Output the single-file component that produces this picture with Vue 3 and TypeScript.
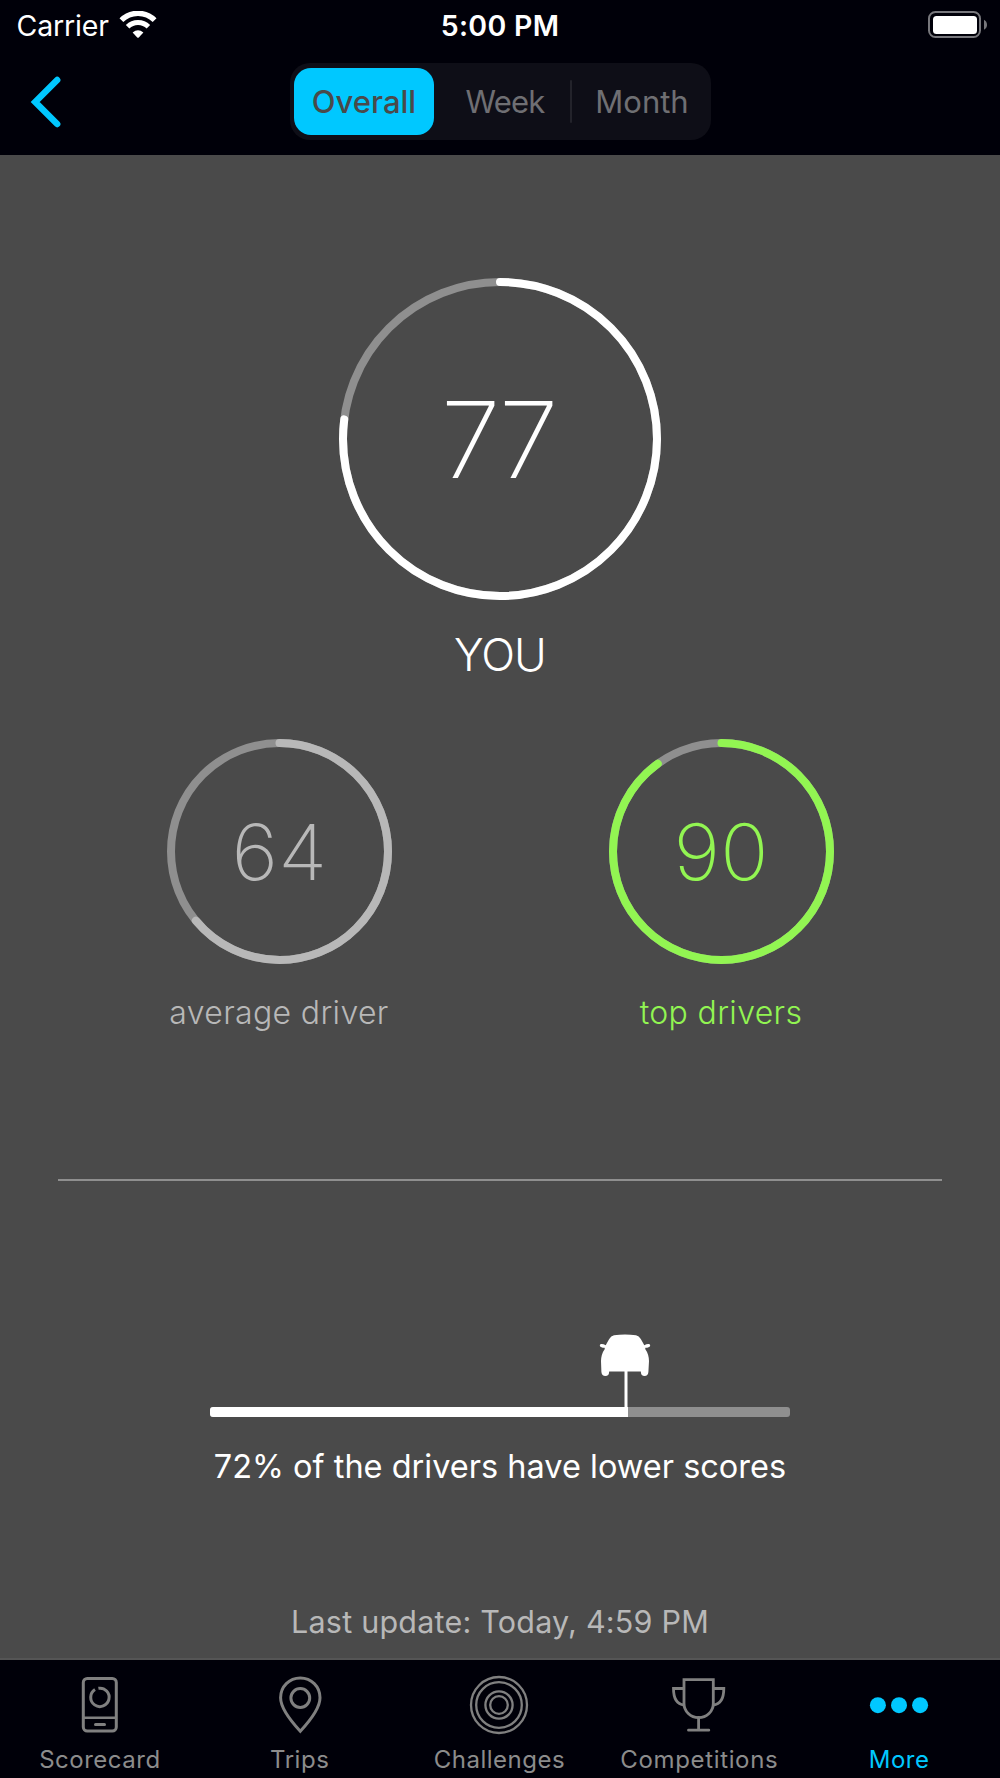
<script setup lang="ts">
interface Score {
  id: string
  value: number
  label: string
  size: number
}

const you: Score = { id: 'you', value: 77, label: 'YOU', size: 322 }
const peers: Score[] = [
  { id: 'average', value: 64, label: 'average driver', size: 225 },
  { id: 'leaders', value: 90, label: 'top drivers', size: 225 },
]
const stroke = 8
const radius = (s: Score): number => (s.size - stroke) / 2

const tabs: string[] = ['Scorecard', 'Trips', 'Challenges', 'Competitions', 'More']
const percentile = 72
</script>

<template>
  <div class="screen">
    <header class="top">
      <div class="status">
        <div class="carrier">
          <span class="carrier-name">Carrier</span>
          <svg class="wifi" width="38" height="28" viewBox="0 0 38 28">
            <g fill="none" stroke="#fff">
              <path d="M2.4 9.2A23.5 23.5 0 0 1 35.6 9.2" stroke-width="5.4" />
              <path d="M8.6 15.8A14.8 14.8 0 0 1 29.4 15.8" stroke-width="5" />
            </g>
            <path d="M13.6 21.4Q19 17 24.4 21.4L20 26.3Q19 27.3 18 26.3Z" fill="#fff" />
          </svg>
        </div>
        <span class="time">5:00 PM</span>
        <div class="power">
          <svg width="60" height="28" viewBox="0 0 60 28">
            <rect x="1" y="1" width="51" height="25" rx="6.5" fill="none" stroke="#77777c" stroke-width="2" />
            <rect x="5" y="5" width="44" height="18" rx="3.5" fill="#fff" />
            <path d="M56 8.8Q59 10.5 59 13.8T56 18.8Z" fill="#77777c" />
          </svg>
        </div>
      </div>
      <nav class="nav">
        <svg class="back" width="40" height="56" viewBox="0 0 40 56">
          <path d="M31.2 6L9.2 28L31.2 50" fill="none" stroke="#00c8ff" stroke-width="6.4" stroke-linecap="round" stroke-linejoin="miter" />
        </svg>
        <div class="segments">
          <span class="seg active">Overall</span>
          <span class="seg week">Week</span>
          <i class="rule"></i>
          <span class="seg month">Month</span>
        </div>
      </nav>
    </header>

    <main class="content">
      <section class="score you">
        <div class="ring">
          <svg :width="you.size" :height="you.size" :viewBox="`0 0 ${you.size} ${you.size}`">
            <circle class="track" :cx="you.size / 2" :cy="you.size / 2" :r="radius(you)" :stroke-width="stroke" />
            <circle class="arc" :cx="you.size / 2" :cy="you.size / 2" :r="radius(you)" :stroke-width="stroke"
              pathLength="100" :stroke-dasharray="`${you.value} 100`"
              :transform="`rotate(-90 ${you.size / 2} ${you.size / 2})`" />
          </svg>
          <span class="value">{{ you.value }}</span>
        </div>
        <span class="label">{{ you.label }}</span>
      </section>

      <div class="peers">
        <section v-for="p in peers" :key="p.id" class="score" :class="p.id">
          <div class="ring">
            <svg :width="p.size" :height="p.size" :viewBox="`0 0 ${p.size} ${p.size}`">
              <circle class="track" :cx="p.size / 2" :cy="p.size / 2" :r="radius(p)" :stroke-width="stroke" />
              <circle class="arc" :cx="p.size / 2" :cy="p.size / 2" :r="radius(p)" :stroke-width="stroke"
                pathLength="100" :stroke-dasharray="`${p.value} 100`"
                :transform="`rotate(-90 ${p.size / 2} ${p.size / 2})`" />
            </svg>
            <span class="value">{{ p.value }}</span>
          </div>
          <span class="label">{{ p.label }}</span>
        </section>
      </div>

      <hr class="divider" />

      <section class="rank">
        <svg class="car" width="52" height="76" viewBox="0 0 52 76">
          <path d="M15 1.2Q26 -0.4 37 1.2Q40 1.8 41.8 5L45.3 11.2Q48 9.6 50 10Q51.6 10.6 51 12.2Q50.4 13.6 46.4 13.8L46.2 15Q49.8 20 50 27L49.4 38Q49 42 45.6 42Q42 42 41.8 37.4H10.2Q10 42 6.4 42Q2.8 42 2.4 38L2 27Q2.2 20 5.8 15L5.6 13.8Q1.6 13.6 1 12.2Q0.4 10.6 2 10Q4 9.6 6.7 11.2L10.2 5Q12 1.8 15 1.2Z" fill="#fff" />
          <path d="M27 36V76" stroke="#fff" stroke-width="3" />
        </svg>
        <div class="bar"><div class="fill" :style="{ width: percentile + '%' }"></div></div>
        <p class="rank-text">{{ percentile }}% of the drivers have lower scores</p>
      </section>

      <p class="updated">Last update: Today, 4:59 PM</p>
    </main>

    <footer class="tabbar">
      <div v-for="t in tabs" :key="t" class="tab" :class="t.toLowerCase()">
        <svg width="64" height="64" viewBox="0 0 64 64" fill="none" stroke="#808080" stroke-width="3">
          <template v-if="t === 'Scorecard'">
            <rect x="15.3" y="6.5" width="33" height="52.6" rx="4" />
            <path d="M15.3 45.7H48.3" stroke-width="2.6" />
            <path d="M27.5 52.5H36.5" stroke-linecap="round" />
            <path d="M30.4 16.3A9.2 9.2 0 1 1 27 17.6" />
          </template>
          <template v-else-if="t === 'Trips'">
            <path d="M32.3 59.3C26 52.5 12.6 38 12.6 25.8C12.6 14.5 21.3 6 32.3 6S52 14.5 52 25.8C52 38 38.6 52.5 32.3 59.3Z" />
            <circle cx="32.3" cy="26" r="9.4" />
          </template>
          <template v-else-if="t === 'Challenges'">
            <g stroke-width="2.3">
              <circle cx="32" cy="33" r="28" />
              <circle cx="32" cy="33" r="22.8" />
              <circle cx="32" cy="33" r="13.6" />
              <circle cx="32" cy="33" r="8.8" />
            </g>
          </template>
          <template v-else-if="t === 'Competitions'">
            <g stroke-width="2.8">
              <path d="M17 7.6H46.3V31.5A14.65 14.2 0 0 1 17 31.5Z" />
              <path d="M17 16.5H6.5Q6.5 32 17 33M46.3 16.5H56.8Q56.8 32 46.3 33" />
              <path d="M31.6 45.5V57.5M21.5 58.2H41.8" stroke-linecap="round" />
            </g>
          </template>
          <g v-else fill="#00c8ff" stroke="none">
            <circle cx="10.9" cy="33.2" r="8" />
            <circle cx="32" cy="33.2" r="8" />
            <circle cx="53.1" cy="33.2" r="8" />
          </g>
        </svg>
        <span class="tab-label">{{ t }}</span>
      </div>
    </footer>
  </div>
</template>

<style>
body {
  margin: 0;
  background: #4a4a4a;
}
</style>

<style scoped>
.screen {
  width: 1000px;
  height: 1778px;
  display: flex;
  flex-direction: column;
  overflow: hidden;
  background: #4a4a4a;
  color: #fff;
  font-family: Inter, "Liberation Sans", sans-serif;
  white-space: nowrap;
}
.top {
  height: 155px;
  background: #000009;
}
.status {
  height: 50px;
  display: grid;
  grid-template-columns: 1fr auto 1fr;
  align-items: center;
  font-size: 28.5px;
  line-height: 50px;
}
.carrier {
  display: flex;
  align-items: center;
  padding-left: 16.5px;
}
.carrier-name {
  padding-top: 1px;
  letter-spacing: -0.15px;
}
.wifi {
  margin: -2px 0 0 10.5px;
}
.time {
  padding-top: 1px;
  font-weight: 600;
  letter-spacing: 0.3px;
}
.power {
  display: flex;
  justify-content: flex-end;
  padding: 0 12px 1px 0;
}
.nav {
  height: 105px;
  display: grid;
  grid-template-columns: 290px 421px 1fr;
  align-items: start;
}
.back {
  margin: 24px 0 0 26px;
}
.segments {
  margin-top: 13px;
  height: 77px;
  box-sizing: border-box;
  padding: 0 4px;
  display: flex;
  align-items: center;
  border-radius: 20px;
  background: #0e0e17;
  font-size: 31px;
  color: #6f6f73;
}
.seg {
  width: 135px;
  text-align: center;
  line-height: 67px;
}
.seg.active {
  width: 140px;
  border-radius: 17px;
  background: #00c8ff;
  color: #4a4a4a;
  font-weight: 500;
}
.seg.week {
  box-sizing: border-box;
  padding-left: 6px;
  width: 136px;
  letter-spacing: -0.8px;
}
.seg.month {
  box-sizing: border-box;
  padding-left: 5px;
}
.rule {
  width: 2px;
  height: 43px;
  border-radius: 1px;
  background: #23232b;
}
.content {
  height: 1503px;
  display: flex;
  flex-direction: column;
  align-items: center;
}
.score {
  display: flex;
  flex-direction: column;
  align-items: center;
}
.ring {
  display: grid;
  place-items: center;
}
.ring > * {
  grid-area: 1 / 1;
}
.track,
.arc {
  fill: none;
}
.track {
  stroke: #8f8f8f;
}
.arc {
  stroke: currentColor;
  stroke-linecap: round;
}
.value {
  padding-top: 2px;
  font-weight: 200;
  font-size: 77.5px;
  line-height: 1;
  transform: scaleX(1.03);
}
.you {
  margin-top: 123px;
}
.you .value {
  padding-top: 1px;
  padding-right: 5px;
  font-size: 106px;
  letter-spacing: -4px;
  transform: scaleX(1.02);
}
.you .label {
  margin-top: 28px;
  font-size: 44.5px;
  line-height: 54px;
  font-weight: 300;
  letter-spacing: -0.9px;
}
.peers {
  width: 667px;
  margin-top: 57px;
  display: flex;
  justify-content: space-between;
}
.peers .score {
  width: 225px;
}
.average {
  color: #b8b8b8;
}
.leaders {
  color: #92f552;
}
.peers .label {
  margin-top: 29px;
  font-size: 32px;
  line-height: 40px;
  font-weight: 300;
  letter-spacing: 0.35px;
}
.divider {
  width: 884px;
  height: 2px;
  margin: 146px 0 0;
  border: 0;
  background: #8f8f8f;
}
.rank {
  width: 580px;
  margin-top: 153px;
  display: flex;
  flex-direction: column;
  align-items: flex-start;
}
.car {
  margin-left: 389px;
}
.bar {
  width: 580px;
  height: 10px;
  margin-top: -3px;
  border-radius: 3px;
  overflow: hidden;
  background: #8f8f8f;
}
.fill {
  height: 10px;
  background: #fff;
}
.rank-text {
  margin: 30px 0 0;
  align-self: center;
  font-size: 32.5px;
  line-height: 40px;
}
.updated {
  margin: 115px 0 0;
  font-size: 30.5px;
  line-height: 40px;
  letter-spacing: 0.22px;
  color: #b8b8b8;
}
.tabbar {
  height: 120px;
  box-sizing: border-box;
  border-top: 2px solid #555;
  padding-right: 1px;
  display: grid;
  grid-template-columns: repeat(5, 1fr);
  background: #000009;
}
.tab {
  padding-top: 12px;
  display: flex;
  flex-direction: column;
  align-items: center;
  color: #8c8c8c;
  font-size: 24px;
  line-height: 30px;
}
.tab-label {
  margin-top: 9px;
  letter-spacing: 0.5px;
}
.competitions .tab-label {
  letter-spacing: 0.65px;
}
.more {
  color: #00c8ff;
}
</style>
